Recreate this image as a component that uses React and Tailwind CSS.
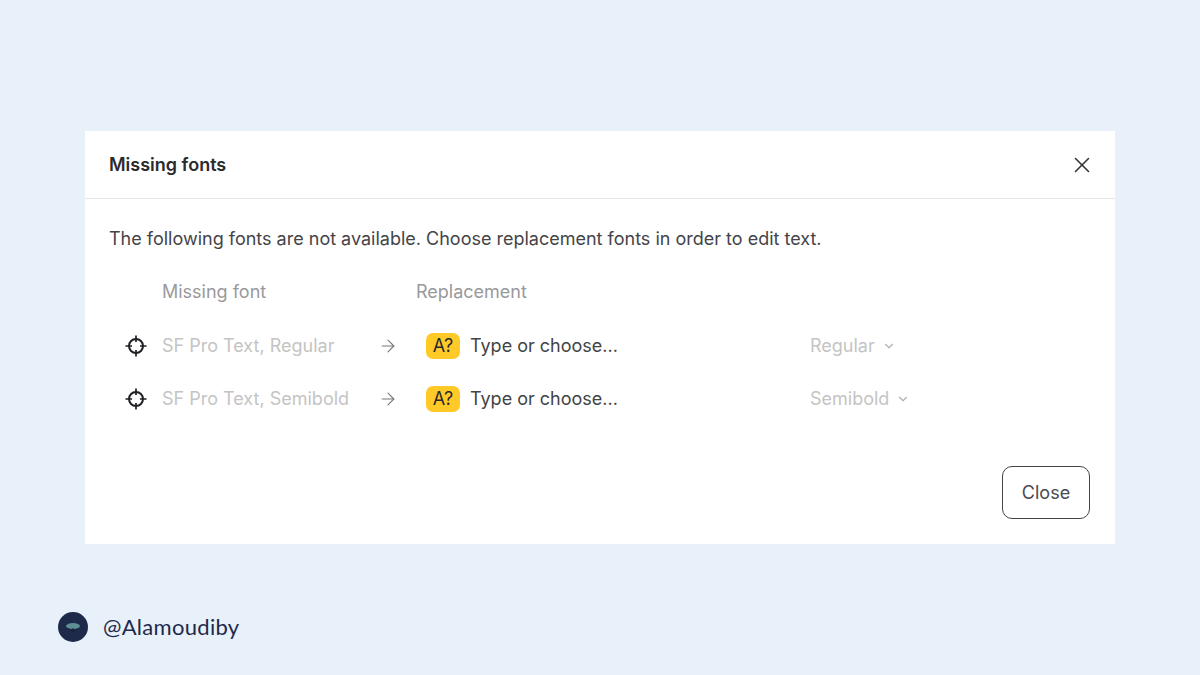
import { X, ArrowRight, ChevronDown } from 'lucide-react'

const ROWS = [
  { missing: 'SF Pro Text, Regular', style: 'Regular' },
  { missing: 'SF Pro Text, Semibold', style: 'Semibold' },
]

function Target() {
  return (
    <svg width="22" height="22" viewBox="0 0 22 22" fill="none" stroke="#1f1f24" strokeWidth="2">
      <circle cx="11" cy="11" r="7" />
      <path d="M11 0.5V7M11 15V21.5M0.5 11H7M15 11H21.5" strokeWidth="1.7" />
    </svg>
  )
}

function FontRow({ missing, style }) {
  return (
    <div className="flex h-[53px] items-center">
      <div className="flex w-[53px] shrink-0 justify-center pl-[0px]"><Target /></div>
      <span className="w-[216px] shrink-0 text-[#c4c4c4]">{missing}</span>
      <ArrowRight size={20} strokeWidth={1.3} className="shrink-0 text-[#77777c]" />
      <span className="ml-[28px] flex h-[26px] w-[34px] shrink-0 items-center justify-center rounded-[7px] bg-[#ffc928] text-[#2a2a2a]">A?</span>
      <span className="ml-[10px] w-[340px] shrink-0 text-[#444]">Type or choose...</span>
      <span className="text-[#c4c4c4]">{style}</span>
      <ChevronDown size={14} className="ml-[7px] text-[#b0b0b0]" />
    </div>
  )
}

export default function App() {
  return (
    <div className="relative h-[675px] w-[1200px] overflow-hidden bg-[#e8f0fa] pl-[85px] pt-[131px] font-['Inter',sans-serif] text-[18px]">
      <div className="flex h-[413px] w-[1030px] flex-col bg-white">
        <div className="flex h-[68px] shrink-0 items-center justify-between border-b border-[#e6e6e6] pl-[24px] pr-[20px]">
          <h1 className="text-[18px] font-semibold text-[#2b2b2e]">Missing fonts</h1>
          <X size={26} strokeWidth={1.5} className="text-[#333336]" />
        </div>
        <p className="ml-[24px] mt-[27px] leading-[26px] text-[#444448]">
          The following fonts are not available. Choose replacement fonts in order to edit text.
        </p>
        <div className="ml-[24px] mt-[27px] flex h-[26px] items-center leading-[26px] text-[#99999c]">
          <span className="ml-[53px] w-[254px]">Missing font</span>
          <span>Replacement</span>
        </div>
        <div className="ml-[24px] mt-[14px]">
          {ROWS.map((r) => <FontRow key={r.style} {...r} />)}
        </div>
        <div className="mt-auto flex justify-end pb-[25px] pr-[25px]">
          <button className="h-[53px] w-[88px] rounded-[10px] border border-[#444448] text-[#4a4a4e]">Close</button>
        </div>
      </div>
      <div className="mt-[66px] ml-[-27px] flex items-center gap-[15px]">
        <div className="flex h-[30px] w-[30px] items-center justify-center rounded-full bg-[#1e2a4a]">
          <svg width="18" height="12" viewBox="0 0 18 12">
            <ellipse cx="9" cy="5" rx="7" ry="3" fill="#5f8f96" />
            <path d="M9 7v4M6 10h6" stroke="#16203a" strokeWidth="1" />
          </svg>
        </div>
        <span className="font-['Lato',sans-serif] text-[22px] tracking-[0.3px] text-[#1e2a4a]">@Alamoudiby</span>
      </div>
    </div>
  )
}
